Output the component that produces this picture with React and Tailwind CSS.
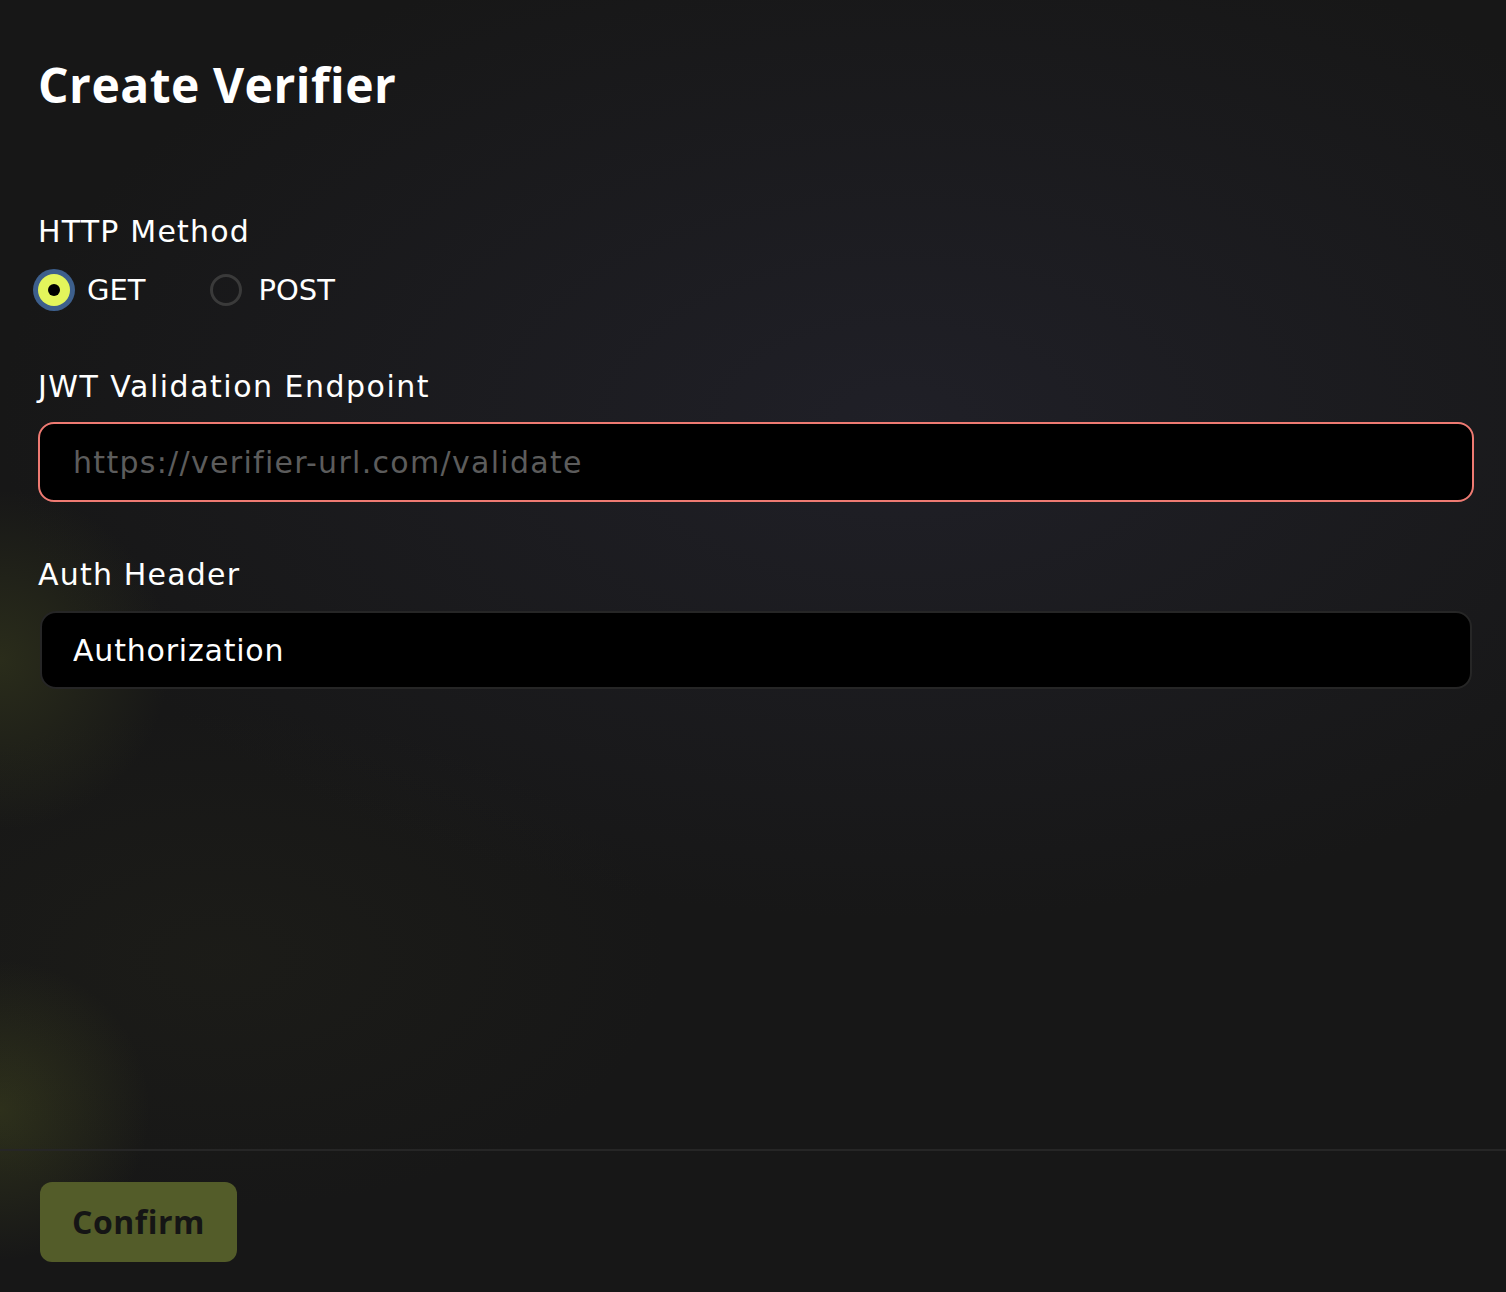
import { useState } from "react";

const RadioOption = ({ label, checked, onSelect, className }) => (
  <button onClick={onSelect} className={"flex items-center gap-[17px] " + (className || "")}>
    <span
      className={
        checked
          ? "w-[32px] h-[32px] rounded-full bg-[#e3f55b] ring-[5px] ring-[#3d5f8c] flex items-center justify-center"
          : "w-[32px] h-[32px] rounded-full border-[3px] border-[#3a3a3a]"
      }
    >
      {checked && <span className="w-[12px] h-[12px] rounded-full bg-black" />}
    </span>
    <span className="text-[29px] leading-[40px]">{label}</span>
  </button>
);

export default function App() {
  const [method, setMethod] = useState("GET");

  return (
    <div
      className="h-[1292px] w-full flex flex-col text-white bg-[#171717] bg-[radial-gradient(ellipse_900px_500px_at_900px_420px,rgba(40,40,55,0.5),transparent),radial-gradient(circle_170px_at_0px_660px,rgba(110,120,40,0.22),transparent),radial-gradient(circle_150px_at_0px_1110px,rgba(110,120,40,0.25),transparent),radial-gradient(ellipse_450px_250px_at_220px_960px,rgba(60,60,30,0.12),transparent)]"
      style={{ fontFamily: '"DejaVu Sans", "Open Sans", sans-serif' }}
    >
      <div className="flex-1 flex flex-col pl-[38px] pr-[32px] pt-[56px]">
        <h1 className="text-[48px] leading-[58px] font-bold tracking-[0.5px] font-['Open_Sans',sans-serif]">
          Create Verifier
        </h1>

        {/* HTTP method */}
        <div className="mt-[98px] text-[30px] leading-[40px] tracking-[1.2px]">HTTP Method</div>
        <div className="mt-[16px] h-[44px] flex items-center">
          <RadioOption label="GET" checked={method === "GET"} onSelect={() => setMethod("GET")} />
          <RadioOption
            label="POST"
            className="ml-[64px]"
            checked={method === "POST"}
            onSelect={() => setMethod("POST")}
          />
        </div>

        {/* Endpoint */}
        <div className="mt-[55px] text-[30px] leading-[40px] tracking-[1.5px]">JWT Validation Endpoint</div>
        <input
          className="mt-[15px] h-[80px] w-full rounded-[16px] border-2 border-[#ee7a72] bg-black pl-[33px] text-[30px] tracking-[1.3px] text-white placeholder:text-[#5c5c5c] outline-none"
          placeholder="https://verifier-url.com/validate"
        />

        {/* Auth header */}
        <div className="mt-[53px] text-[30px] leading-[40px] tracking-[1.2px]">Auth Header</div>
        <input
          className="mt-[16px] mx-[2px] h-[78px] rounded-[16px] border-2 border-[#262626] bg-black pl-[31px] text-[30px] tracking-[0.8px] text-white outline-none"
          defaultValue="Authorization"
        />
      </div>

      <div className="border-t-2 border-[#262626] pl-[40px] pt-[31px] pb-[30px]">
        <button className="h-[80px] w-[197px] rounded-[12px] bg-[#535c29] text-[32px] font-bold tracking-[0.5px] text-[#151515] font-['Open_Sans',sans-serif]">
          Confirm
        </button>
      </div>
    </div>
  );
}
